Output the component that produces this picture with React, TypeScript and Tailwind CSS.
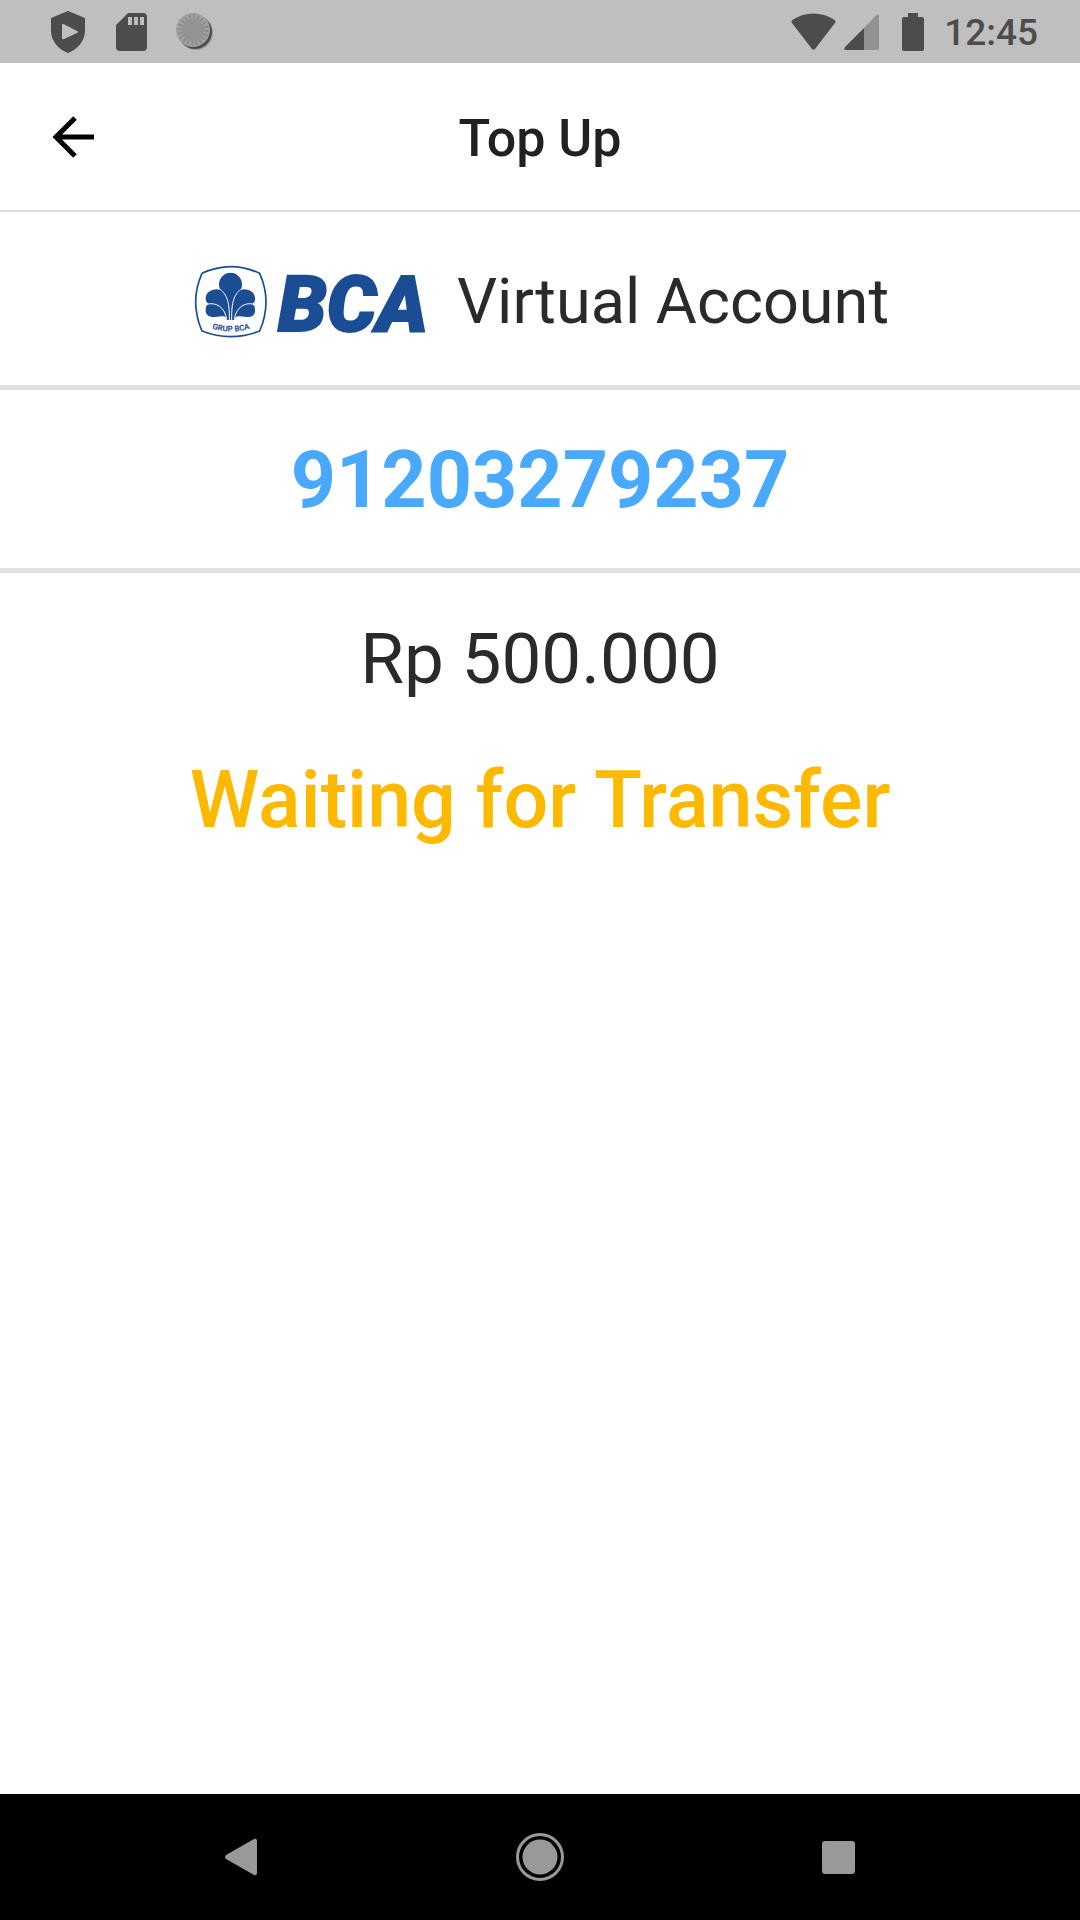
function StatusBar() {
  return (
    <div className="flex h-[63px] items-center justify-between bg-[#bfbfbf] pr-[42px] pl-[50px] text-[#4c4c4c]">
      <div className="flex items-center gap-[29px]">
        <svg className="h-[42px] w-[36px]" viewBox="0 0 36 42" fill="currentColor">
          <path fillRule="evenodd" d="M18 0 35 7V20C35 30 27 39 18 42 9 39 1 30 1 20V7ZM12 14V27Q12 29 14 28L27 22Q29 21 27 20L14 13.200Q12 12.500 12 14Z" />
        </svg>
        <svg className="h-[38px] w-[32px]" viewBox="0 0 32 38" fill="currentColor">
          <path fillRule="evenodd" d="M13 0H28Q32 0 32 4V34Q32 38 28 38H5Q1 38 1 34V12ZM13 4V12H17V4ZM19 4V12H23V4ZM25 4V12H29V4Z" />
        </svg>
        <svg className="h-[40px] w-[40px]" viewBox="0 0 40 40">
          <circle cx="20" cy="21" r="17" fill="#999" />
          <circle cx="19" cy="20" r="17" fill="#4c4c4c" />
          <circle cx="17" cy="18" r="17" fill="#a0a0a0" />
          <circle cx="17" cy="18" r="13" fill="none" stroke="#858585" strokeWidth="5" strokeDasharray="1.300 2.784" />
          <circle cx="17" cy="18" r="11" fill="#939393" />
        </svg>
      </div>
      <div className="flex items-center">
        <svg className="mr-[8px] h-[38px] w-[45px]" viewBox="0 0 45 38" fill="currentColor">
          <path d="M1 10Q-.5 8 2 6.500C14-1.500 31-1.500 43 6.500Q45.500 8 44 10L24 36Q22.500 37.500 21 36Z" />
        </svg>
        <svg className="mr-[23px] h-[38px] w-[35px]" viewBox="0 0 35 38">
          <path d="M20 15 32 2.500Q35 0 35 4V35Q35 37 33 37H20Z" fill="#929292" />
          <path d="M20 15V37H2Q-1 37 1 34Z" fill="currentColor" />
        </svg>
        <svg className="mr-[20px] h-[38px] w-[22px]" viewBox="0 0 22 38" fill="currentColor">
          <path d="M6 0H16V4H20Q22 4 22 6V36Q22 38 20 38H2Q0 38 0 36V6Q0 4 2 4H6Z" />
        </svg>
        <span className="pt-[3px] text-[37px] leading-[42px] font-medium">12:45</span>
      </div>
    </div>
  )
}

function BcaLogo() {
  return (
    <svg className="h-[73px] w-[230px] shrink-0 overflow-visible" viewBox="0 0 230 73" fill="#1a4d94">
      <g transform="translate(-10 -15) scale(.33333)">
        <path d="M51 70Q137 30 224 70Q262 155 224 243Q137 277 51 243Q13 155 51 70Z" fill="none" stroke="#1a4d94" strokeWidth="5" strokeLinejoin="round" />
        <path d="M124 210V180Q124 155 112 130Q102 118 102 103A34.500 34.500 0 0 1 171 103Q171 118 161 130Q150 155 150 180V210Z" />
        <path d="M125 210C123 194 112 200 90 201C70 202 61 193 62 179Q62 166 71 161Q61 155 62 143C64 127 79 118 96 118Q113 118 124 138L135 180V210Z" />
        <path d="M149 210C151 194 162 200 184 201C204 202 211 193 210 179Q210 166 202 161Q212 155 210 143C208 127 194 118 177 118Q160 118 149 138L138 180V210Z" />
        <g fill="none" stroke="#fff" strokeWidth="3">
          <path d="M106 118C125 135 134 153 133 211" />
          <path d="M167 118C148 135 139 153 140 211" />
          <path d="M66 163C92 155 122 172 125 211" />
          <path d="M207 163C181 155 151 172 148 211" />
        </g>
      </g>
      <path id="arc" d="M12 62Q36 71 60 62" fill="none" />
      <text fontSize="8" fontWeight="700" textAnchor="middle">
        <textPath href="#arc" startOffset="50%">GRUP BCA</textPath>
      </text>
      <text x="83" y="66" fontSize="78" fontWeight="900" fontStyle="italic" stroke="#1a4d94" strokeWidth="2">
        BCA
      </text>
    </svg>
  )
}

function NavBar() {
  return (
    <nav className="grid h-[126px] grid-cols-3 items-center bg-black px-[92px]">
      <button aria-label="Back" className="flex justify-center">
        <svg className="h-[38px] w-[32px]" viewBox="0 0 32 38" fill="#999">
          <path d="M1 17 29 1Q32 0 32 3V35Q32 38 29 37L1 21Q-1 19 1 17Z" />
        </svg>
      </button>
      <button aria-label="Home" className="flex justify-center">
        <svg className="h-[48px] w-[48px]" viewBox="0 0 48 48" fill="#999">
          <circle cx="24" cy="24" r="17.500" />
          <circle cx="24" cy="24" r="22.500" fill="none" stroke="#999" strokeWidth="3" />
        </svg>
      </button>
      <button aria-label="Recent apps" className="flex justify-center">
        <span className="size-[33px] rounded-[3px] bg-[#999]" />
      </button>
    </nav>
  )
}

export default function App() {
  return (
    <div className="flex min-h-screen flex-col bg-white font-['Roboto',sans-serif] text-[#2a2a2a]">
      <StatusBar />
      <header className="grid h-[149px] grid-cols-[1fr_auto_1fr] items-center border-b-2 border-[#dedede] px-[48px]">
        <button aria-label="Go back" className="justify-self-start">
          <svg className="h-[42px] w-[50px]" viewBox="0 0 50 42" fill="none" stroke="#000" strokeWidth="5">
            <path d="M46 21H8M27 2 8 21 27 40" />
          </svg>
        </button>
        <h1 className="pt-[4px] text-[52px] leading-[64px] font-medium text-[#212121]">Top Up</h1>
      </header>
      <main className="flex-1 text-center">
        <section className="flex items-center justify-center gap-[32px] border-b-[5px] border-[#e0e0e0] pt-[52px] pb-[46px] pl-[4px]">
          <BcaLogo />
          <h2 className="text-[63px] leading-[75px]">Virtual Account</h2>
        </section>
        <p className="border-b-[5px] border-[#e0e0e0] pt-[44px] pb-[42px] text-[79px] leading-[92px] font-bold text-[#48a9ff]">
          91203279237
        </p>
        <p className="pt-[44px] text-[71px] leading-[84px]">Rp 500.000</p>
        <p className="pt-[53px] text-[79px] leading-[92px] font-medium text-[#fdb900]">Waiting for Transfer</p>
      </main>
      <NavBar />
    </div>
  )
}
